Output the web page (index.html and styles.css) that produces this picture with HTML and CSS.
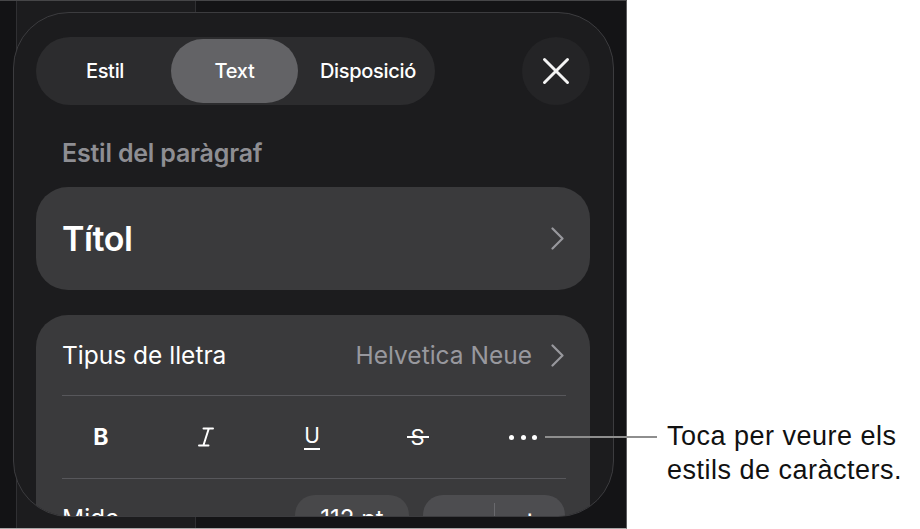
FILE: index.html
```html
<!DOCTYPE html>
<html lang="ca">
<head>
<meta charset="utf-8">
<title>Format – Text</title>
<link rel="stylesheet" href="styles.css">
</head>
<body>
<div class="stage">
  <div class="screen">
    <div class="backdrop-edge"></div>
    <div class="backdrop-pane"></div>
    <div class="backdrop-rest"></div>

    <section class="sheet">
      <header class="sheet-head">
        <nav class="segmented">
          <button class="seg">Estil</button>
          <button class="seg seg-active">Text</button>
          <button class="seg">Disposició</button>
        </nav>
        <button class="close" aria-label="Tanca">
          <svg width="28" height="28" viewBox="0 0 28 28"><path d="M2.5 2.5 L25.5 25.5 M25.5 2.5 L2.5 25.5" /></svg>
        </button>
      </header>

      <h3 class="section-label">Estil del paràgraf</h3>

      <div class="card style-card">
        <span class="style-name">Títol</span>
        <svg class="chevron" width="13" height="23" viewBox="0 0 13 23"><polyline points="1.5,1.5 11.5,11.5 1.5,21.5" /></svg>
      </div>

      <div class="card font-card">
        <div class="font-row">
          <span>Tipus de lletra</span>
          <span class="value">Helvetica Neue
            <svg class="chevron" width="13" height="23" viewBox="0 0 13 23"><polyline points="1.5,1.5 11.5,11.5 1.5,21.5" /></svg>
          </span>
        </div>
        <div class="divider"></div>
        <div class="format-row">
          <span class="fmt fmt-bold">B</span>
          <span class="fmt">
            <svg width="16" height="20" viewBox="0 0 16 20"><path d="M5.5 1.5 H15 M1 18.5 H10.5 M10.8 1.5 L5.4 18.5" /></svg>
          </span>
          <span class="fmt fmt-under">U</span>
          <span class="fmt fmt-strike">S</span>
          <span class="fmt fmt-more"><i></i><i></i><i></i></span>
        </div>
        <div class="divider"></div>
        <div class="size-row">
          <span>Mide</span>
          <div class="size-controls">
            <span class="size-pill">112 pt</span>
            <div class="stepper">
              <span class="step">−</span>
              <span class="step-sep"></span>
              <span class="step">+</span>
            </div>
          </div>
        </div>
      </div>
    </section>
  </div>

  <div class="callout">
    <span class="callout-line"></span>
    <p class="callout-text">Toca per veure els<br>estils de caràcters.</p>
  </div>
</div>
</body>
</html>
```
FILE: styles.css
```css
* { box-sizing: border-box; }

html, body {
  margin: 0;
  padding: 0;
  background: #ffffff;
}

.stage {
  position: relative;
  width: 920px;
  height: 529px;
  font-family: "Inter", "Noto Sans", sans-serif;
}

/* device screen */
.screen {
  position: relative;
  display: flex;
  width: 627px;
  height: 529px;
  background: #131315;
  border-top: 1px solid #464648;
  border-right: 1px solid #5c5c5e;
  border-bottom: 1px solid #a8a8a8;
  overflow: hidden;
}

.backdrop-edge {
  width: 16px;
  background: #131315;
}

.backdrop-pane {
  width: 180px;
  background: #1c1c1e;
  border-left: 1px solid #303033;
  border-right: 1px solid #303033;
}

.backdrop-rest {
  flex: 1;
  background: #141416;
}

/* format sheet */
.sheet {
  position: absolute;
  top: 11px;
  left: 13px;
  width: 601px;
  height: 505px;
  padding: 24px 23px 0 22px;
  background: #1c1c1e;
  border: 1px solid #3c3c3f;
  border-radius: 56px;
  overflow: hidden;
  color: #ffffff;
}

.sheet-head {
  display: flex;
  justify-content: space-between;
  align-items: center;
  height: 68px;
}

.segmented {
  display: flex;
  width: 399px;
  height: 68px;
  padding: 2px 3px;
  background: #2c2c2e;
  border-radius: 34px;
}

.seg {
  flex: none;
  height: 64px;
  border: 0;
  background: transparent;
  color: #ffffff;
  font-family: inherit;
  font-size: 20px;
  font-weight: 500;
  letter-spacing: -0.3px;
  border-radius: 32px;
  padding: 0;
}

.seg:nth-child(1) { width: 132px; }
.seg:nth-child(2) { width: 127px; }
.seg:nth-child(3) { width: 134px; padding-left: 6px; }

.seg-active {
  background: #636366;
}

.close {
  display: flex;
  align-items: center;
  justify-content: center;
  width: 68px;
  height: 68px;
  padding: 0;
  border: 0;
  border-radius: 50%;
  background: #242426;
}

.close path {
  stroke: #f4f4f4;
  stroke-width: 3;
  stroke-linecap: round;
  fill: none;
}

.section-label {
  margin: 36px 0 21px 26px;
  font-size: 25px;
  line-height: 25px;
  font-weight: 600;
  letter-spacing: -0.2px;
  color: #8e8e93;
}

.card {
  background: #3a3a3c;
  border-radius: 32px;
}

.chevron polyline {
  fill: none;
  stroke: #98989d;
  stroke-width: 2.2;
  stroke-linecap: round;
  stroke-linejoin: round;
}

.style-card {
  display: flex;
  align-items: center;
  justify-content: space-between;
  height: 103px;
  padding: 0 26px;
}

.style-name {
  font-size: 34px;
  font-weight: 600;
  letter-spacing: -0.4px;
}

.font-card {
  margin-top: 25px;
  height: 260px;
}

.font-row {
  display: flex;
  align-items: center;
  justify-content: space-between;
  height: 80px;
  padding: 0 26px;
  font-size: 24.5px;
}

.value {
  display: flex;
  align-items: center;
  gap: 19px;
  color: #98989e;
}

.divider {
  height: 1px;
  margin: 0 24px 0 26px;
  background: #57575b;
}

.format-row {
  display: grid;
  grid-template-columns: repeat(5, 1fr);
  align-items: center;
  justify-items: center;
  height: 82px;
  padding: 0 14px 0 12px;
}

.fmt {
  display: flex;
  align-items: center;
  justify-content: center;
  line-height: 1;
  color: #ffffff;
}

.fmt svg path {
  fill: none;
  stroke: #ffffff;
  stroke-width: 2;
  stroke-linecap: round;
}

.fmt-bold {
  font-size: 23px;
  font-weight: 700;
}

.fmt-under {
  font-size: 21px;
  font-weight: 400;
  padding-bottom: 2px;
  border-bottom: 2px solid #ffffff;
}

.fmt-strike {
  position: relative;
  font-size: 22px;
  font-weight: 400;
}

.fmt-strike::after {
  content: "";
  position: absolute;
  left: -4px;
  right: -4px;
  top: 50%;
  height: 2px;
  margin-top: -1px;
  background: #ffffff;
}

.fmt-more {
  gap: 6.5px;
}

.fmt-more i {
  width: 5px;
  height: 5px;
  border-radius: 50%;
  background: #ffffff;
}

.size-row {
  display: flex;
  align-items: center;
  justify-content: space-between;
  padding: 16px 25px 0 26px;
  font-size: 24.5px;
}

.size-controls {
  display: flex;
  gap: 14px;
}

.size-pill {
  display: flex;
  align-items: center;
  justify-content: center;
  width: 114px;
  height: 46px;
  border-radius: 20px;
  background: #48484a;
  font-size: 24px;
}

.stepper {
  display: flex;
  align-items: center;
  width: 142px;
  height: 46px;
  border-radius: 20px;
  background: #4d4d50;
  font-size: 28px;
}

.step {
  flex: 1;
  text-align: center;
}

.step-sep {
  width: 1px;
  height: 30px;
  background: #69696d;
}

/* annotation */
.callout {
  position: absolute;
  left: 545px;
  top: 419px;
  display: flex;
  align-items: flex-start;
}

.callout-line {
  width: 112px;
  height: 2px;
  margin-top: 17px;
  margin-right: 10px;
  background: #8e8e8e;
}

.callout-text {
  margin: 0;
  font-family: "Liberation Sans", Arial, sans-serif;
  font-size: 27px;
  line-height: 34px;
  letter-spacing: 0.5px;
  color: #111111;
}
```
